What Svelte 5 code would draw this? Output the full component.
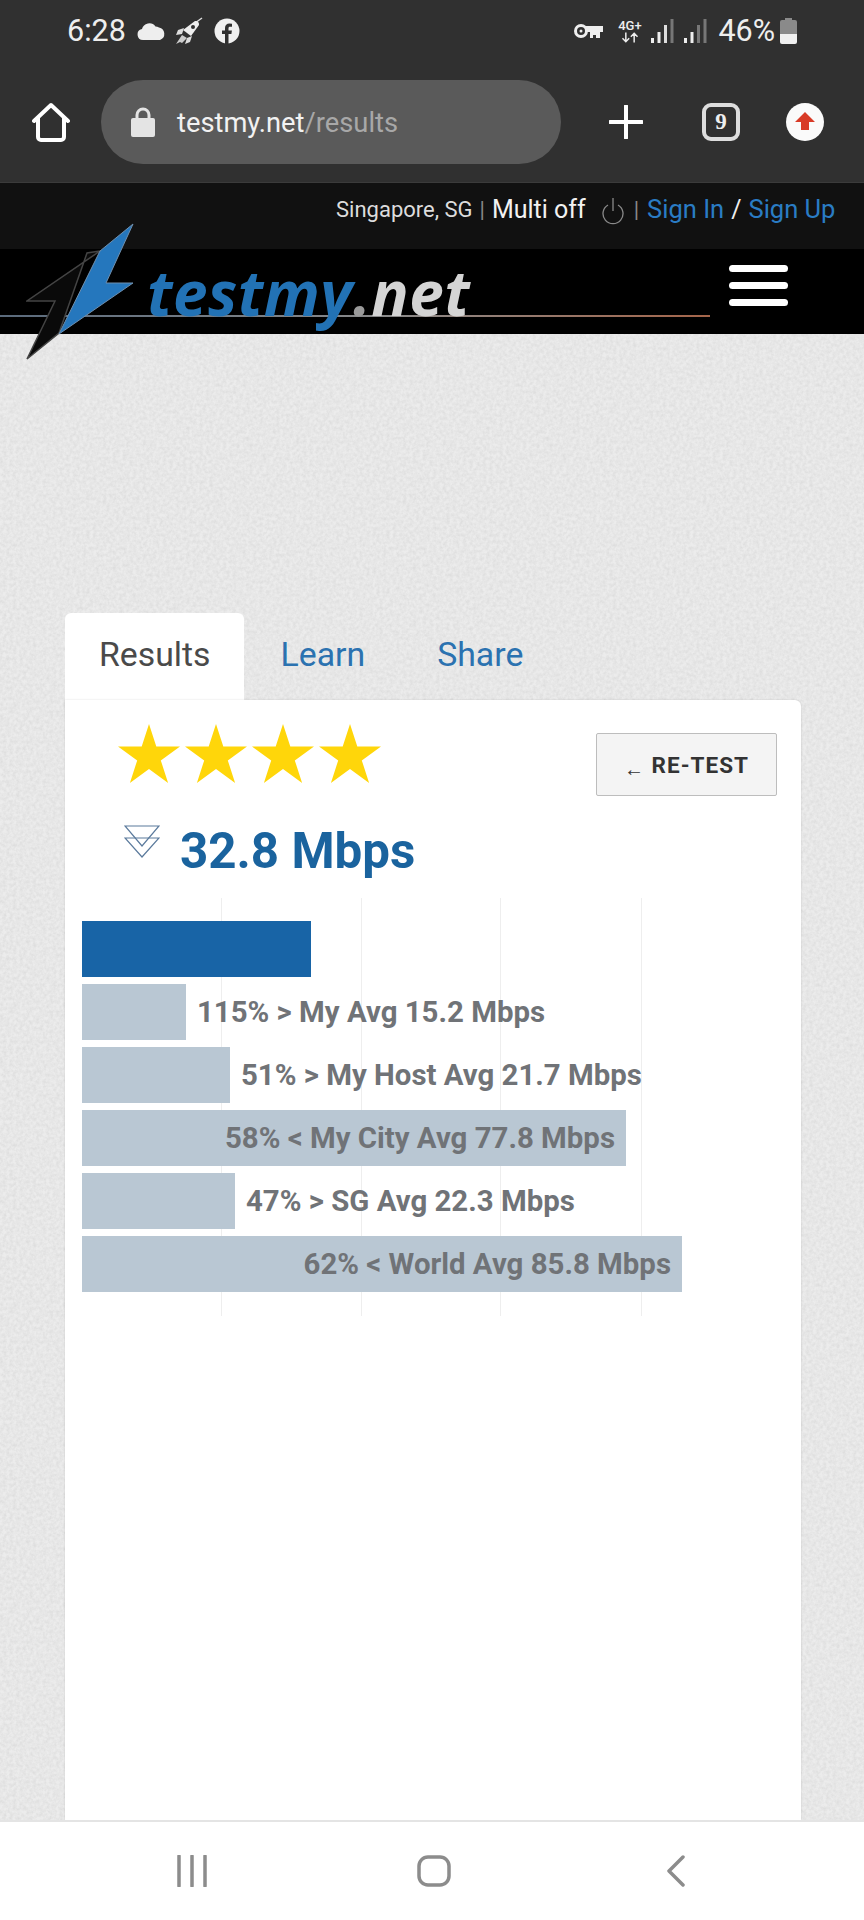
<script lang="ts">
	const rows = [
		{ width: 104, label: '115% > My Avg 15.2 Mbps', inside: false },
		{ width: 148, label: '51% > My Host Avg 21.7 Mbps', inside: false },
		{ width: 544, label: '58% < My City Avg 77.8 Mbps', inside: true },
		{ width: 153, label: '47% > SG Avg 22.3 Mbps', inside: false },
		{ width: 600, label: '62% < World Avg 85.8 Mbps', inside: true }
	];
	const gridLines = [139, 279, 418, 559];
	const stars = [0, 1, 2, 3];
</script>

<div class="screen">
	<div class="chrome">
		<div class="status">
			<span class="time">6:28</span>
			<svg class="cloud" viewBox="0 0 28 20"><path d="M6 19a5.500 5.500 0 0 1-1-10.900A7.500 7.500 0 0 1 18.500 5.500 6.800 6.800 0 0 1 22 6.500 6.500 6.500 0 0 1 23 19z" fill="#eee" /></svg>
			<svg class="rocket" viewBox="0 0 28 28">
				<path d="M27 1 20 6" stroke="#ddd" stroke-width="1.500" />
				<path d="M20 4c3 0 4 1 4 4l-8 11-8-6z" fill="#eee" />
				<path d="M9 11 3 13l-2 5 6-1zM17 19l-2 6-5 2 2-6z" fill="#ddd" />
				<path d="M7 18l-6 9 4-2 2 1 5-5z" fill="#ccc" />
				<circle cx="18" cy="10" r="2" fill="#303030" />
			</svg>
			<svg class="fb" viewBox="0 0 26 26">
				<circle cx="13" cy="13" r="12.500" fill="#f0f0f0" />
				<path d="M11 26V16H8v-3.500h3V10c0-3 1.800-4.500 4.400-4.500l2.600.200v3h-1.800c-1.400 0-1.700.700-1.700 1.700v2.100h3.400l-.5 3.500h-2.900v10z" fill="#303030" />
			</svg>
			<span class="spacer"></span>
			<svg class="key" viewBox="0 0 30 16">
				<circle cx="8" cy="8" r="5.500" fill="none" stroke="#eee" stroke-width="3" />
				<circle cx="8" cy="8" r="1.500" fill="#eee" />
				<path d="M13 3h17v6h-3v6h-4v-3h-3v3h-3V9h-4z" fill="#eee" />
			</svg>
			<div class="net">
				<span>4G+</span>
				<svg viewBox="0 0 24 12"><path d="M7 0v10M3 7l4 4 4-4M17 12V2M13 5l4-4 4 4" fill="none" stroke="#eee" stroke-width="1.800" /></svg>
			</div>
			<svg class="signal" viewBox="0 0 23 24">
				<rect x="0" y="19" width="3" height="5" fill="#eee" />
				<rect x="6.500" y="13" width="3" height="11" fill="#eee" />
				<rect x="13" y="6" width="3" height="18" fill="#ddd" />
				<rect x="19.500" y="0" width="3" height="24" fill="#777" />
			</svg>
			<svg class="signal second" viewBox="0 0 23 24">
				<rect x="0" y="19" width="3" height="5" fill="#eee" />
				<rect x="6.500" y="13" width="3" height="11" fill="#eee" />
				<rect x="13" y="6" width="3" height="18" fill="#777" />
				<rect x="19.500" y="0" width="3" height="24" fill="#777" />
			</svg>
			<span class="pct">46%</span>
			<svg class="battery" viewBox="0 0 17 26">
				<path d="M5 0h7v2h3a2 2 0 0 1 2 2v12H0V4a2 2 0 0 1 2-2h3z" fill="#8a8a8a" />
				<path d="M0 16h17v8a2 2 0 0 1-2 2H2a2 2 0 0 1-2-2z" fill="#f0f0f0" />
			</svg>
		</div>
		<div class="toolbar">
			<svg class="home" viewBox="0 0 38 40">
				<path d="M2 19 19 3l17 16M6 16v19a3 3 0 0 0 3 3h20a3 3 0 0 0 3-3V16" fill="none" stroke="#fff" stroke-width="4" stroke-linecap="round" stroke-linejoin="round" />
			</svg>
			<div class="pill">
				<svg class="lock" viewBox="0 0 24 30">
					<path d="M6 12V8a6 6 0 0 1 12 0v4" fill="none" stroke="#e4e4e4" stroke-width="3" />
					<rect x="0" y="11" width="24" height="19" rx="2" fill="#e4e4e4" />
				</svg>
				<span class="url">testmy.net<span>/results</span></span>
			</div>
			<svg class="plus" viewBox="0 0 34 34"><path d="M17 1v32M1 17h32" stroke="#fff" stroke-width="4" stroke-linecap="round" /></svg>
			<div class="tabcount">9</div>
			<svg class="update" viewBox="0 0 38 38">
				<circle cx="19" cy="19" r="19" fill="#fafafa" />
				<path d="M19 9 29 19h-6v8h-8v-8H9z" fill="#d83a26" />
			</svg>
		</div>
	</div>

	<div class="topbar">
		<span class="loc">Singapore, SG</span>
		<span class="sep">|</span>
		<span class="multi">Multi off</span>
		<svg class="power" viewBox="0 0 22 28">
			<path d="M6 8a10 10 0 1 0 10 0" fill="none" stroke="#8a8a8a" stroke-width="1.300" />
			<path d="M11 1v13" stroke="#8a8a8a" stroke-width="1.300" />
		</svg>
		<span class="sep second">|</span>
		<span class="link">Sign In</span>
		<span class="slash">/</span>
		<span class="link">Sign Up</span>
	</div>

	<header class="brand">
		<div class="rule"></div>
		<svg class="bolt" viewBox="0 0 108 138">
			<path d="M74 28 1 78h28L1 136l32-26 28-80z" fill="#0a0a0a" stroke="#444" stroke-width="1.500" />
			<path d="M107 1 80 60h27L33 111 74 28z" fill="#2577bd" stroke="#6f8fae" stroke-width="1" />
		</svg>
		<div class="wordmark"><span class="blue">testmy</span><span class="dot">.</span><span class="grey">net</span></div>
		<div class="burger"><i></i><i></i><i></i></div>
	</header>

	<main class="page">
		<nav class="tabs">
			<span class="tab active">Results</span>
			<span class="tab">Learn</span>
			<span class="tab">Share</span>
		</nav>
		<section class="card">
			<div class="top">
				<div class="stars">
					{#each stars as s (s)}
						<svg viewBox="0 0 62 59"><path d="M31 0l7.300 22.500H62L42.800 36.400 50.100 59 31 45 11.900 59l7.300-22.600L0 22.500h23.700z" fill="#ffd60a" /></svg>
					{/each}
				</div>
				<button class="retest"><span class="arrow">←</span> RE-TEST</button>
			</div>
			<div class="speed">
				<svg viewBox="0 0 36 33">
					<path d="M1 1h34L18 21z" fill="none" stroke="#5b7a9c" stroke-width="1.200" />
					<path d="M1 13h34L18 32z" fill="none" stroke="#5b7a9c" stroke-width="1.200" />
				</svg>
				<span>32.8 Mbps</span>
			</div>
			<div class="chart">
				{#each gridLines as left (left)}
					<i class="gridline" style="left: {left}px"></i>
				{/each}
				<div class="row"><div class="bar current" style="width: 229px"></div></div>
				{#each rows as row (row.label)}
					<div class="row">
						<div class="bar" class:inside={row.inside} style="width: {row.width}px">
							{#if row.inside}<span>{row.label}</span>{/if}
						</div>
						{#if !row.inside}<span class="after">{row.label}</span>{/if}
					</div>
				{/each}
			</div>
		</section>
	</main>

	<footer class="navbar">
		<svg class="nav-recent" viewBox="0 0 30 32"><path d="M2 1v30M15 1v30M28 1v30" stroke="#8c8c8c" stroke-width="3.500" stroke-linecap="round" /></svg>
		<svg class="nav-home" viewBox="0 0 34 32"><rect x="2" y="2" width="30" height="28" rx="9" fill="none" stroke="#8c8c8c" stroke-width="3.500" /></svg>
		<svg class="nav-back" viewBox="0 0 18 32"><path d="M16 2 2 16l14 14" fill="none" stroke="#8c8c8c" stroke-width="3.500" stroke-linecap="round" stroke-linejoin="round" /></svg>
	</footer>
</div>

<style>
	:global(body) { margin: 0; font-family: Roboto, "Liberation Sans", sans-serif; }
	.screen { display: flex; flex-direction: column; width: 864px; height: 1920px; overflow: hidden; }

	.chrome { background: #303030; color: #eee; height: 183px; flex: none; box-sizing: border-box; border-bottom: 1px solid #3b3b3b; }
	.status { display: flex; align-items: center; height: 61px; padding: 0 67px 0 67px; box-sizing: border-box; }
	.time { font-size: 30.500px; font-weight: 400; margin-right: 11px; }
	.cloud { width: 28px; height: 20px; margin-right: 10px; }
	.rocket { width: 28px; height: 28px; margin-right: 11px; }
	.fb { width: 26px; height: 26px; }
	.spacer { flex: 1; }
	.key { width: 30px; height: 16px; margin-right: 14px; }
	.net { display: flex; flex-direction: column; align-items: center; width: 25px; margin-right: 9px; }
	.net span { font-size: 13px; font-weight: 500; line-height: 13px; }
	.net svg { width: 20px; height: 11px; }
	.signal { width: 23px; height: 24px; margin-right: 10px; }
	.signal.second { margin-right: 11px; }
	.pct { font-size: 30.500px; margin-right: 5px; }
	.battery { width: 17px; height: 26px; }

	.toolbar { display: flex; align-items: center; height: 122px; padding-left: 32px; }
	.home { width: 38px; height: 40px; margin-right: 31px; }
	.pill { display: flex; align-items: center; width: 460px; height: 84px; border-radius: 42px; background: #5a5a5a; margin-right: 48px; box-sizing: border-box; padding-left: 30px; }
	.lock { width: 24px; height: 30px; margin-right: 22px; }
	.url { font-size: 27.300px; color: #f2f2f2; position: relative; top: 1px; }
	.url span { color: #a8a8a8; }
	.plus { width: 34px; height: 34px; margin-right: 59px; }
	.tabcount { box-sizing: border-box; width: 38px; height: 38px; border: 4px solid #ddd; border-radius: 9px; margin-right: 46px; color: #eee; font: 700 23px/30px "Liberation Serif", serif; text-align: center; }
	.update { width: 38px; height: 38px; }

	.topbar { display: flex; align-items: center; height: 66px; flex: none; background: #111; color: #ddd; padding: 0 0 14px 336px; box-sizing: border-box; }
	.loc { font-size: 22px; }
	.sep { font-size: 22px; color: #888; margin: 0 7px; }
	.multi { font-size: 25px; color: #f2f2f2; }
	.power { width: 22px; height: 28px; margin-left: 16px; position: relative; top: 2px; }
	.sep.second { margin: 0 8px 0 10px; }
	.link { font-size: 25.500px; color: #2a7cc4; }
	.slash { font-size: 25px; color: #eee; margin: 0 7px; }

	.brand { position: relative; height: 85px; flex: none; background: #000; z-index: 2; }
	.rule { position: absolute; left: 0; top: 66px; width: 710px; height: 2px; background: linear-gradient(90deg, #5a6a7c, #8a8a8a 55%, #a5654a); }
	.bolt { position: absolute; left: 26px; top: -26px; width: 108px; height: 138px; }
	.wordmark { position: absolute; left: 147px; top: 5px; font: italic 700 62px/76px "Open Sans", sans-serif; letter-spacing: 0.500px; }
	.blue { color: #2272b5; }
	.dot { color: #9a9a9a; }
	.grey { color: #d4d4d4; }
	.burger { position: absolute; left: 729px; top: 16px; display: flex; flex-direction: column; gap: 10px; }
	.burger i { display: block; width: 59px; height: 7px; border-radius: 4px; background: #fff; }

	.page {
		flex: 1;
		min-height: 0;
		box-sizing: border-box;
		padding: 279px 63px 0 65px;
		display: flex;
		flex-direction: column;
		background-color: #ececec;
		background-image: url("data:image/svg+xml,%3Csvg xmlns='http://www.w3.org/2000/svg' width='300' height='300'%3E%3Cfilter id='n'%3E%3CfeTurbulence type='fractalNoise' baseFrequency='.3' numOctaves='3'/%3E%3CfeColorMatrix values='0 0 0 0 .5 0 0 0 0 .5 0 0 0 0 .5 0 0 0 .5 -.14'/%3E%3C/filter%3E%3Crect width='300' height='300' filter='url(%23n)'/%3E%3C/svg%3E");
	}
	.tabs { display: flex; height: 87px; flex: none; }
	.tab { display: flex; align-items: center; padding: 0 36px 4px; font-size: 33.800px; color: #2b72b0; }
	.tab.active { padding: 0 33px 4px 34px; background: #fff; color: #4a4a4a; border-radius: 6px 6px 0 0; margin-right: 1px; }
	.card { flex: 1; background: #fff; border-radius: 0 6px 0 0; box-shadow: 0 0 2px rgba(0,0,0,.15); }

	.top { display: flex; justify-content: space-between; align-items: flex-start; height: 109px; padding: 24px 24px 0 53px; box-sizing: border-box; }
	.stars { display: flex; gap: 5px; }
	.stars svg { width: 62px; height: 59px; }
	.retest { width: 181px; height: 63px; margin-top: 9px; box-sizing: border-box; background: #f4f4f4; border: 1.500px solid #bdbdbd; border-radius: 2px; font: 700 22.500px Roboto, sans-serif; letter-spacing: 1px; color: #333; }
	.arrow { font-size: 20px; font-family: "Liberation Sans", sans-serif; position: relative; top: 3px; }

	.speed { display: flex; align-items: flex-start; height: 89px; padding-left: 59px; gap: 20px; }
	.speed svg { width: 36px; height: 33px; margin-top: 16px; }
	.speed span { font-size: 49.300px; font-weight: 700; line-height: 84px; color: #1a639e; }

	.chart { position: relative; display: flex; flex-direction: column; gap: 7px; margin-left: 17px; width: 640px; padding: 23px 0 24px; }
	.gridline { position: absolute; top: 0; bottom: 0; width: 1px; background: #eeeeee; }
	.row { position: relative; display: flex; align-items: center; height: 56px; }
	.bar { height: 56px; background: #b9c7d3; flex: none; }
	.bar.current { background: #1864a6; }
	.bar.inside { display: flex; align-items: center; justify-content: flex-end; padding-right: 11px; box-sizing: border-box; }
	.bar span, .after { font-size: 29.400px; font-weight: 700; color: #707377; white-space: nowrap; }
	.after { margin-left: 11px; }

	.navbar { display: flex; align-items: center; position: relative; height: 100px; flex: none; background: #fff; border-top: 2px solid #e4e4e4; box-sizing: border-box; padding-left: 177px; }
	.nav-recent { width: 30px; height: 32px; margin-right: 210px; }
	.nav-home { width: 34px; height: 32px; margin-right: 216px; }
	.nav-back { width: 18px; height: 32px; }
</style>
